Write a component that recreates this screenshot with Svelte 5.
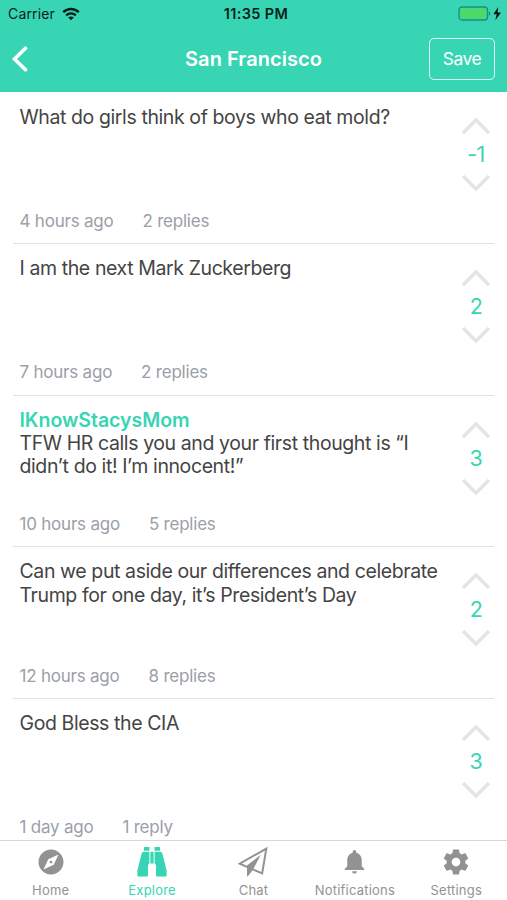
<script lang="ts">
    interface Post {
        author?: string;
        text: string;
        age: string;
        replies: string;
        score: number;
    }

    const posts: Post[] = [
        { text: 'What do girls think of boys who eat mold?', age: '4 hours ago', replies: '2 replies', score: -1 },
        { text: 'I am the next Mark Zuckerberg', age: '7 hours ago', replies: '2 replies', score: 2 },
        { author: 'IKnowStacysMom', text: 'TFW HR calls you and your first thought is “I didn’t do it! I’m innocent!”', age: '10 hours ago', replies: '5 replies', score: 3 },
        { text: 'Can we put aside our differences and celebrate Trump for one day, it’s President’s Day', age: '12 hours ago', replies: '8 replies', score: 2 },
        { text: 'God Bless the CIA', age: '1 day ago', replies: '1 reply', score: 3 },
    ];

    const tabs = ['Home', 'Explore', 'Chat', 'Notifications', 'Settings'];
    let currentTab = $state('Explore');
</script>

<div class="screen">
    <header>
        <div class="status-bar">
            <div class="carrier">
                <span>Carrier</span>
                <svg width="18" height="14" viewBox="0 0 18 14" fill="none" stroke="#08201a" stroke-width="2.4">
                    <path d="M1.2 5.2C5.6.9 12.4.9 16.8 5.2" />
                    <path d="M4.1 8.3c2.8-2.6 7-2.6 9.8 0" />
                    <path d="M9 13.2 6.2 10.5c1.6-1.4 4-1.4 5.6 0z" fill="#08201a" stroke="none" />
                </svg>
            </div>
            <div class="clock">11:35 PM</div>
            <div class="battery">
                <svg width="45" height="16" viewBox="0 0 45 16">
                    <rect x="1" y="1" width="28.5" height="13" rx="3" fill="none" stroke="#1f8d78" stroke-width="1.3" />
                    <rect x="2.4" y="2.4" width="25.7" height="10.2" rx="1.6" fill="#4cd964" />
                    <path d="M30.8 5.2c2 .8 2 3.8 0 4.6z" fill="#1f8d78" />
                    <path d="M40.2 1 35.4 8.2h3.3l-1.4 6L43 6.4h-3.5z" fill="#08120f" />
                </svg>
            </div>
        </div>
        <div class="nav-bar">
            <button class="back" aria-label="Back">
                <svg width="17" height="28" viewBox="0 0 17 28" fill="none" stroke="#fff" stroke-width="3.6" stroke-linecap="round">
                    <path d="M14.5 3.2 3.5 14l11 10.8" />
                </svg>
            </button>
            <h1>San Francisco</h1>
            <button class="save">Save</button>
        </div>
    </header>

    <main>
        {#each posts as post}
            <article>
                <div class="content">
                    {#if post.author}
                        <div class="author">{post.author}</div>
                    {/if}
                    <p>{post.text}</p>
                    <div class="meta">
                        <span>{post.age}</span>
                        <span>{post.replies}</span>
                    </div>
                </div>
                <div class="votes">
                    <button aria-label="Upvote">
                        <svg width="30" height="18" viewBox="0 0 30 18"><path d="M2 16 15 3l13 13" /></svg>
                    </button>
                    <span class="score">{post.score}</span>
                    <button aria-label="Downvote">
                        <svg width="30" height="18" viewBox="0 0 30 18"><path d="M2 2l13 13L28 2" /></svg>
                    </button>
                </div>
            </article>
        {/each}
    </main>

    <nav>
        {#each tabs as tab}
            <button class="tab" class:active={tab === currentTab} onclick={() => (currentTab = tab)}>
                <span class="icon">
                    {#if tab === 'Home'}
                        <svg width="30" height="30" viewBox="0 0 24 24"><path d="M12 10.9c-.61 0-1.1.49-1.1 1.1s.49 1.1 1.1 1.1c.61 0 1.1-.49 1.1-1.1s-.49-1.1-1.1-1.1zM12 2C6.48 2 2 6.48 2 12s4.48 10 10 10 10-4.48 10-10S17.52 2 12 2zm2.19 12.19L6 18l3.81-8.19L18 6l-3.81 8.19z" /></svg>
                    {:else if tab === 'Explore'}
                        <svg width="30" height="30" viewBox="0 0 30 30">
                            <path d="M7.4 0h4.6q.5 0 .5.5v3.3H6.9V.5q0-.5.5-.5zM18 0h4.6q.5 0 .5.5v3.3h-5.6V.5q0-.5.5-.5zM6.5 4.8h5.9v11.7q-1.4.8-1.4 2.2v9.7q0 1-1 1H1.4q-1 0-1-1v-5L4.6 6.5q.5-1.7 1.9-1.7zM23.5 4.8h-5.9v11.7q1.4.8 1.4 2.2v9.7q0 1 1 1h8.6q1 0 1-1v-5L25.4 6.5q-.5-1.7-1.9-1.7zM13.4 4.8h3.2v11.7h-3.2z" />
                        </svg>
                    {:else if tab === 'Chat'}
                        <svg width="30" height="30" viewBox="0 0 30 30">
                            <path class="outline" d="M28.3 1.6 1.8 16.6l8.2 3.7 14.2 6.1z" />
                            <path d="M22.8 7.8 9 18.6v10.9l.9-.2 4.9-6.2z" />
                        </svg>
                    {:else if tab === 'Notifications'}
                        <svg width="29" height="29" viewBox="0 0 24 24"><path d="M12 22c1.1 0 2-.9 2-2h-4c0 1.1.89 2 2 2zm6-6v-5c0-3.07-1.64-5.64-4.5-6.32V4c0-.83-.67-1.5-1.5-1.5s-1.5.67-1.5 1.5v.68C7.63 5.36 6 7.92 6 11v5l-2 2v1h16v-1l-2-2z" /></svg>
                    {:else}
                        <svg width="30" height="30" viewBox="0 0 24 24"><path d="M19.43 12.98c.04-.32.07-.64.07-.98s-.03-.66-.07-.98l2.11-1.65c.19-.15.24-.42.12-.64l-2-3.46c-.12-.22-.39-.3-.61-.22l-2.49 1c-.52-.4-1.08-.73-1.69-.98l-.38-2.65C14.46 2.18 14.25 2 14 2h-4c-.25 0-.46.18-.49.42l-.38 2.65c-.61.25-1.17.59-1.69.98l-2.49-1c-.23-.09-.49 0-.61.22l-2 3.46c-.13.22-.07.49.12.64l2.11 1.65c-.04.32-.07.65-.07.98s.03.66.07.98l-2.11 1.65c-.19.15-.24.42-.12.64l2 3.46c.12.22.39.3.61.22l2.49-1c.52.4 1.08.73 1.69.98l.38 2.65c.03.24.24.42.49.42h4c.25 0 .46-.18.49-.42l.38-2.65c.61-.25 1.17-.59 1.69-.98l2.49 1c.23.09.49 0 .61-.22l2-3.46c.12-.22.07-.49-.12-.64l-2.11-1.65zM12 15.5c-1.93 0-3.5-1.57-3.5-3.5s1.57-3.5 3.5-3.5 3.5 1.57 3.5 3.5-1.57 3.5-3.5 3.5z" /></svg>
                    {/if}
                </span>
                <span>{tab}</span>
            </button>
        {/each}
    </nav>
</div>

<style>
    :global(body) { margin: 0; background: #fff; }
    .screen { display: flex; flex-direction: column; height: 900px; overflow: hidden; font-family: Inter, "Liberation Sans", sans-serif; color: #444; }
    button { padding: 0; border: none; background: none; font: inherit; color: inherit; cursor: pointer; }
    svg { display: block; }

    header { flex: none; height: 92.4px; background: #38d5b4; }
    .status-bar { display: grid; grid-template-columns: 1fr auto 1fr; align-items: center; height: 27px; padding: 0 4px 0 8px; color: #08201a; font-size: 14px; }
    .carrier { display: flex; align-items: center; gap: 7px; letter-spacing: 0.15px; }
    .clock { padding-left: 1px; font-size: 14.5px; font-weight: 600; letter-spacing: 0.35px; }
    .battery { display: flex; justify-content: flex-end; }
    .nav-bar { display: grid; grid-template-columns: 1fr auto 1fr; align-items: center; height: 64px; padding: 0 11px 0 11px; color: #fff; }
    .back { justify-self: start; }
    h1 { margin: 0; font-size: 20px; font-weight: 600; letter-spacing: 0.05px; }
    .save { justify-self: end; box-sizing: border-box; width: 66px; height: 42px; margin-right: 1px; padding-bottom: 2px; border: 1.5px solid #d9fff5; border-radius: 5px; font-size: 17.5px; letter-spacing: -0.5px; }

    main { flex: 1; min-height: 0; overflow: hidden; padding: 0 13px; }
    article { display: flex; justify-content: space-between; box-sizing: border-box; height: 151.6px; border-bottom: 1px solid #e0e2e4; }
    .content { display: flex; flex-direction: column; width: 430px; padding: 13.3px 0 11.2px 6.5px; font-size: 19.5px; line-height: 23.3px; letter-spacing: -0.4px; }
    .author { color: #38d5b4; font-weight: 600; letter-spacing: -0.03px; }
    p { margin: 0; }
    .meta { display: flex; gap: 29px; margin-top: auto; color: #9aa0a8; font-size: 17px; line-height: 22px; letter-spacing: -0.22px; }
    .votes { display: flex; flex-direction: column; align-items: center; width: 30px; margin-right: 3px; padding-top: 25px; }
    .votes path { fill: none; stroke: #e2e6e9; stroke-width: 3.6; }
    .score { height: 39px; line-height: 39px; color: #38d5b4; font-size: 21.5px; letter-spacing: -0.5px; }

    nav { flex: none; display: grid; grid-template-columns: repeat(5, 1fr); box-sizing: border-box; height: 60px; border-top: 1px solid #d8d8d8; background: #fff; }
    .tab { display: flex; flex-direction: column; align-items: center; color: #929292; font-size: 13px; line-height: 16px; letter-spacing: 0.22px; }
    .tab.active { color: #38d5b4; }
    .icon { display: grid; place-items: center; height: 41px; }
    .icon svg { fill: currentColor; }
    .icon .outline { fill: none; stroke: currentColor; stroke-width: 2; }
</style>
